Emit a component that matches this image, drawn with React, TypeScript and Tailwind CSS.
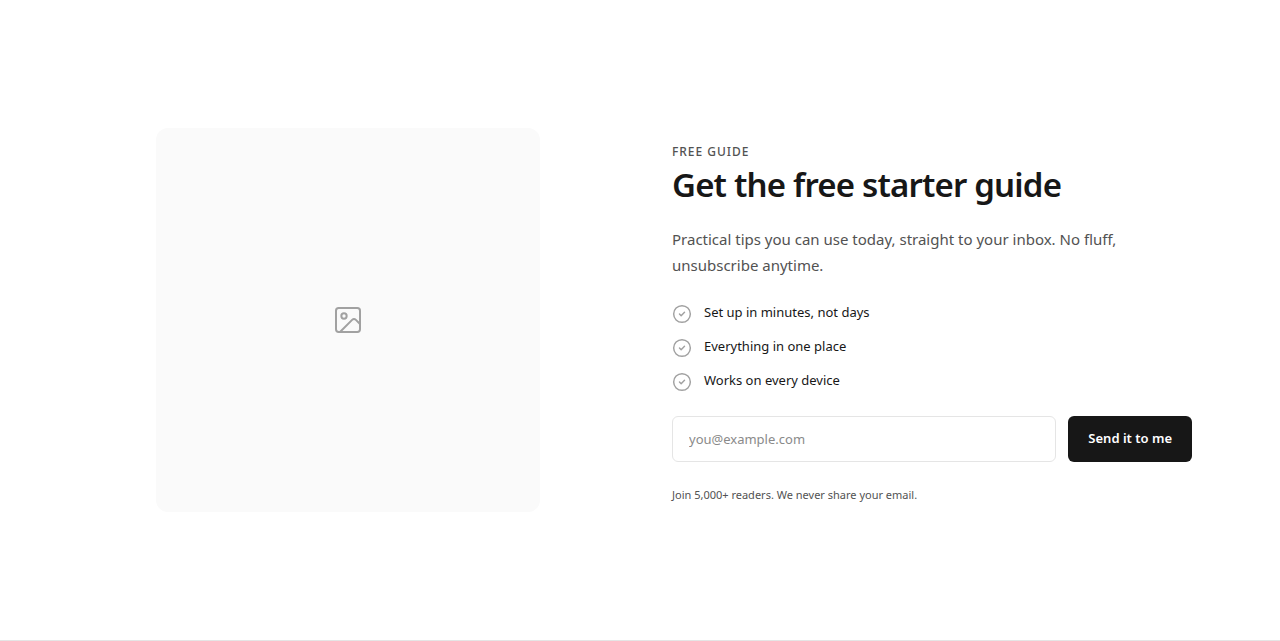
import React from 'react';
import { CircleCheck, Image } from 'lucide-react';

const benefits = [
  'Set up in minutes, not days',
  'Everything in one place',
  'Works on every device',
];

const App: React.FC = () => {
  return (
    <section className="border-b border-neutral-200 bg-white font-['Noto_Sans','Open_Sans',sans-serif] text-neutral-900">
      <div className="max-w-6xl mx-auto px-6 py-32 grid md:grid-cols-2 gap-16 items-center">
        {/* Cover placeholder */}
        <div className="w-full max-w-96 aspect-square mx-auto rounded-xl bg-neutral-50 flex items-center justify-center text-neutral-400">
          <Image size={32} strokeWidth={1.5} />
        </div>

        <div>
          <p className="text-xs leading-8 font-medium tracking-[0.08em] uppercase text-neutral-600">
            Free guide
          </p>
          <h1 className="text-[33px] leading-[34px] font-semibold tracking-tight">
            Get the free starter guide
          </h1>
          <p className="mt-6 text-[15px] leading-[26px] text-neutral-600">
            Practical tips you can use today, straight to your inbox. No fluff, unsubscribe anytime.
          </p>

          <ul className="mt-6 flex flex-col gap-3">
            {benefits.map((benefit) => (
              <li key={benefit} className="flex items-start gap-3 text-[13px] leading-5">
                <CircleCheck size={20} strokeWidth={1.75} className="mt-0.5 shrink-0 text-neutral-400" />
                {benefit}
              </li>
            ))}
          </ul>

          <form className="mt-6 flex gap-3" onSubmit={(e) => e.preventDefault()}>
            <input
              type="email"
              aria-label="Email address"
              placeholder="you@example.com"
              className="flex-1 min-w-0 h-[46px] px-4 rounded-md border border-neutral-200 bg-white text-[13px] placeholder:text-[#8a8a8a]"
            />
            <button
              type="submit"
              className="h-[46px] px-5 rounded-md bg-neutral-900 text-white text-[13px] font-semibold"
            >
              Send it to me
            </button>
          </form>

          <p className="mt-6 text-[11px] leading-[18px] text-neutral-600">
            Join 5,000+ readers. We never share your email.
          </p>
        </div>
      </div>
    </section>
  );
};

export default App;
